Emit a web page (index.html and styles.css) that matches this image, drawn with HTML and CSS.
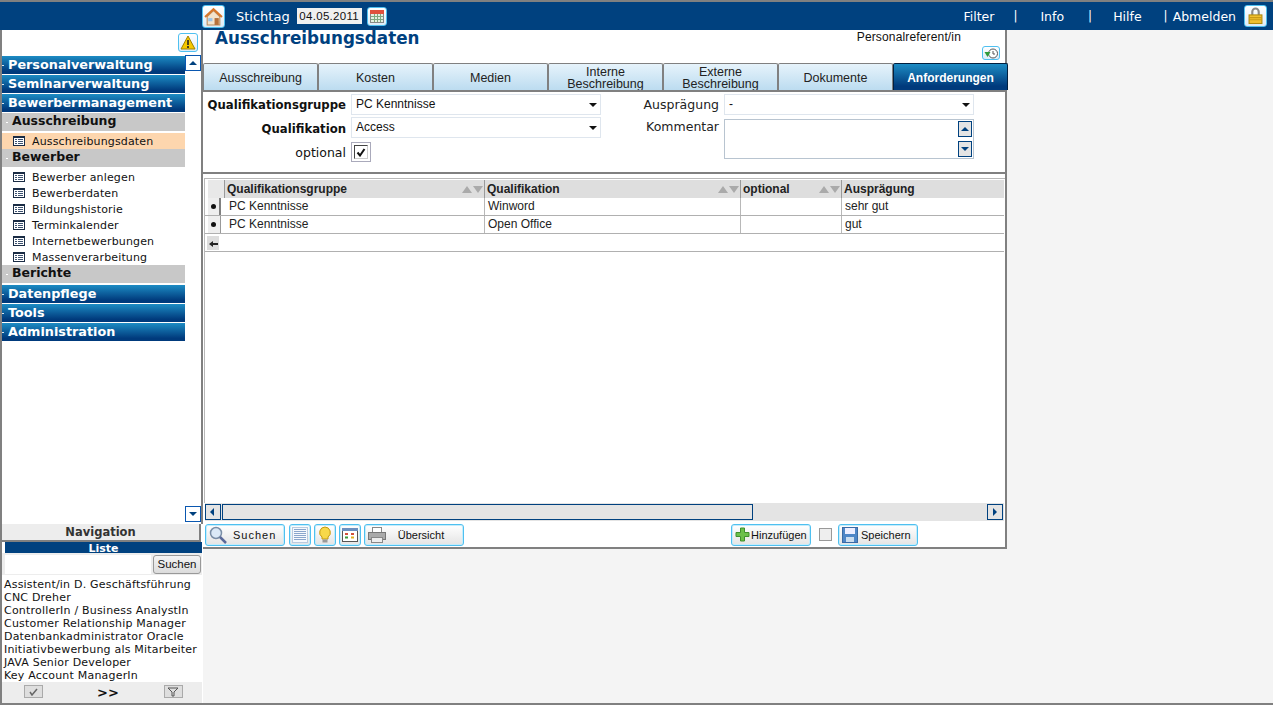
FILE: index.html
```html
<!DOCTYPE html>
<html>
  <head>
    <meta charset="UTF-8">
    <title>Ausschreibungsdaten</title>
    <link rel="stylesheet" href="styles.css">
  </head>
  <body>
    <svg class="defs" width="0" height="0">
      <symbol id="tbl" viewBox="0 0 12 10">
        <rect x="0.5" y="0.5" width="11" height="9" fill="#fff" stroke="#1a2c45"/>
        <path d="M0 1.500h12" stroke="#1a2c45" fill="none"/>
        <path d="M2 3.500h2M5 3.500h5M2 5.500h2M5 5.500h5M2 7.500h2M5 7.500h5" stroke="#3d5270" fill="none"/>
      </symbol>
    </svg>

    <header class="topbar">
      <div class="top-left">
        <span class="icon-btn home">
          <svg width="19" height="19" viewBox="0 0 18 18"><path d="M3 9 9 3.500 15 9v8H3z" fill="#f3e3cc" stroke="#b98a5a"/><path d="M1 9.500 9 2l8 7.500" fill="none" stroke="#d9772a" stroke-width="2"/><rect x="10" y="10.500" width="4" height="6.500" fill="#b5703a"/><rect x="4" y="10.500" width="4" height="3" fill="#9cc4e8"/></svg>
        </span>
        <span class="stichtag">Stichtag</span>
        <span class="date">04.05.2011</span>
        <span class="icon-btn cal">
          <svg width="16" height="16" viewBox="0 0 16 16"><rect x="1.500" y="2.500" width="13" height="12" fill="#e4efe0" stroke="#888"/><rect x="1" y="2" width="14" height="4" fill="#e0503c"/><path d="M2 8.500h12M2 11.500h12M5.500 6v8M8.500 6v8M11.500 6v8" stroke="#7fa87f"/></svg>
        </span>
      </div>
      <nav class="top-right">
        <span class="top-link">Filter</span><span class="sep one">|</span>
        <span class="top-link">Info</span><span class="sep two">|</span>
        <span class="top-link">Hilfe</span><span class="sep last">|</span>
        <span class="top-link">Abmelden</span>
        <span class="icon-btn lock">
          <svg width="15" height="18" viewBox="0 0 14 16"><path d="M4 7V4a3 3 0 0 1 6 0v3" fill="none" stroke="#8a8a8a" stroke-width="2"/><rect x="1" y="7" width="12" height="8" fill="#f0c030" stroke="#b08a10"/><path d="M1 9.500h12M1 11.500h12" stroke="#c89a18"/></svg>
        </span>
      </nav>
    </header>

    <div class="page">
      <aside class="sidebar">
        <div class="nav-area">
          <div class="warn-row">
            <span class="icon-btn warn">
              <svg width="16" height="15" viewBox="0 0 16 15"><path d="M8 1 15 14H1z" fill="#f5c800" stroke="#a08000"/><path d="M8 5v5M8 11v2" stroke="#222" stroke-width="1.6"/></svg>
            </span>
          </div>
          <div class="menu">
            <div class="menu-head">Personalverwaltung</div>
            <div class="menu-head">Seminarverwaltung</div>
            <div class="menu-head">Bewerbermanagement</div>
            <div class="menu-sub gap">Ausschreibung</div>
            <div class="menu-item active"><svg width="12" height="10"><use href="#tbl"/></svg>Ausschreibungsdaten</div>
            <div class="menu-sub gap">Bewerber</div>
            <div class="menu-item"><svg width="12" height="10"><use href="#tbl"/></svg>Bewerber anlegen</div>
            <div class="menu-item"><svg width="12" height="10"><use href="#tbl"/></svg>Bewerberdaten</div>
            <div class="menu-item"><svg width="12" height="10"><use href="#tbl"/></svg>Bildungshistorie</div>
            <div class="menu-item"><svg width="12" height="10"><use href="#tbl"/></svg>Terminkalender</div>
            <div class="menu-item"><svg width="12" height="10"><use href="#tbl"/></svg>Internetbewerbungen</div>
            <div class="menu-item"><svg width="12" height="10"><use href="#tbl"/></svg>Massenverarbeitung</div>
            <div class="menu-sub gap">Berichte</div>
            <div class="menu-head">Datenpflege</div>
            <div class="menu-head">Tools</div>
            <div class="menu-head">Administration</div>
          </div>
          <span class="nav-arrow up"></span>
          <span class="nav-arrow down"></span>
        </div>
        <div class="nav-title">Navigation</div>
        <div class="list-panel">
          <div class="list-title">Liste</div>
          <div class="list-search">
            <span class="list-input"></span>
            <span class="list-btn">Suchen</span>
          </div>
          <div class="list-items">
            <div>Assistent/in D. Geschäftsführung</div>
            <div>CNC Dreher</div>
            <div>ControllerIn / Business AnalystIn</div>
            <div>Customer Relationship Manager</div>
            <div>Datenbankadministrator Oracle</div>
            <div>Initiativbewerbung als Mitarbeiter</div>
            <div>JAVA Senior Developer</div>
            <div>Key Account ManagerIn</div>
          </div>
          <div class="list-foot">
            <span class="foot-btn"><svg width="9" height="8" viewBox="0 0 9 8"><path d="M1 4l2 3 5-6" fill="none" stroke="#666" stroke-width="1.5"/></svg></span>
            <span class="foot-more">&gt;&gt;</span>
            <span class="foot-btn"><svg width="12" height="10" viewBox="0 0 12 10"><path d="M1 1h10L7 5v4H5V5z" fill="none" stroke="#555"/></svg></span>
          </div>
        </div>
      </aside>

      <main class="content">
        <div class="title-row">
          <h1>Ausschreibungsdaten</h1>
          <div class="role">
            <span class="role-name">Personalreferent/in</span>
            <span class="icon-btn hist">
              <svg width="15" height="11" viewBox="0 0 14 11"><circle cx="8.500" cy="5.500" r="4.500" fill="#fff" stroke="#555"/><path d="M8.500 3v3h2" fill="none" stroke="#555"/><path d="M0 4h6L3 9z" fill="#2f9a3a"/></svg>
            </span>
          </div>
        </div>

        <div class="tabs">
          <div class="tab">Ausschreibung</div>
          <div class="tab">Kosten</div>
          <div class="tab">Medien</div>
          <div class="tab two">Interne<br>Beschreibung</div>
          <div class="tab two">Externe<br>Beschreibung</div>
          <div class="tab">Dokumente</div>
          <div class="tab current">Anforderungen</div>
        </div>

        <section class="form">
          <div class="form-col left">
            <div class="field">
              <label class="bold">Qualifikationsgruppe</label>
              <div class="select">PC Kenntnisse</div>
            </div>
            <div class="field low">
              <label class="bold">Qualifikation</label>
              <div class="select">Access</div>
            </div>
            <div class="field opt">
              <label>optional</label>
              <span class="check"><span class="check-box"><svg width="10" height="9" viewBox="0 0 10 9"><path d="M1.500 4.500 4 7.500 8.500 1" fill="none" stroke="#111" stroke-width="2"/></svg></span></span>
            </div>
          </div>
          <div class="form-col right">
            <div class="field">
              <label>Ausprägung</label>
              <div class="select">-</div>
            </div>
            <div class="field top">
              <label>Kommentar</label>
              <div class="textarea">
                <span class="ta-arrow up"></span>
                <span class="ta-arrow down"></span>
              </div>
            </div>
          </div>
        </section>

        <section class="grid-panel">
          <div class="grid-wrap">
            <div class="grid head">
              <div class="cell corner"></div>
              <div class="cell">Qualifikationsgruppe<span class="sort"><i class="s-up"></i><i class="s-down"></i></span></div>
              <div class="cell">Qualifikation<span class="sort"><i class="s-up"></i><i class="s-down"></i></span></div>
              <div class="cell">optional<span class="sort"><i class="s-up"></i><i class="s-down"></i></span></div>
              <div class="cell">Ausprägung</div>
            </div>
            <div class="grid row">
              <div class="cell marker cur"><b></b></div>
              <div class="cell">PC Kenntnisse</div>
              <div class="cell">Winword</div>
              <div class="cell"></div>
              <div class="cell">sehr gut</div>
            </div>
            <div class="grid row">
              <div class="cell marker"><b></b></div>
              <div class="cell">PC Kenntnisse</div>
              <div class="cell">Open Office</div>
              <div class="cell"></div>
              <div class="cell">gut</div>
            </div>
            <div class="add-row">
              <span class="add-icon"><svg width="9" height="7" viewBox="0 0 9 7"><path d="M0 4l4-3v2h5v2H4v2z" fill="#222"/></svg></span>
            </div>
          </div>
          <div class="hscroll">
            <span class="sb-btn left"></span>
            <span class="sb-thumb"></span>
            <span class="sb-btn right"></span>
          </div>
        </section>

        <footer class="toolbar">
          <span class="btn search">
            <svg width="20" height="20" viewBox="0 0 20 20"><circle cx="8" cy="8" r="5.500" fill="#dbe9f7" stroke="#7a8ea6" stroke-width="1.500"/><path d="M12 12l6 6" stroke="#5a6a9a" stroke-width="2.500"/></svg>
            <span class="btn-label spaced">Suchen</span>
          </span>
          <span class="btn square">
            <svg width="18" height="18" viewBox="0 0 18 18"><rect x="1.500" y="1.500" width="15" height="15" fill="#f6f9fd" stroke="#b9cbe0"/><path d="M3 3.500h12M3 5.500h12M3 7.500h12M3 9.500h12M3 11.500h12M3 13.500h12" stroke="#8aa6cc"/></svg>
          </span>
          <span class="btn square">
            <svg width="14" height="18" viewBox="0 0 14 18"><path d="M7 1a5.500 5.500 0 0 0-3 10v2h6v-2A5.500 5.500 0 0 0 7 1z" fill="#f8d94a" stroke="#c49a10"/><rect x="4.500" y="13.500" width="5" height="3" fill="#999"/></svg>
          </span>
          <span class="btn square">
            <svg width="18" height="16" viewBox="0 0 18 16"><rect x="1.500" y="1.500" width="15" height="13" fill="#fff" stroke="#555"/><rect x="1" y="1" width="16" height="3" fill="#6b8fc0"/><path d="M4 7h3M10 7h3" stroke="#d2503c" stroke-width="2"/><path d="M4 10.500h3" stroke="#3a9a3a" stroke-width="2"/><path d="M10 10.500h3" stroke="#e0b020" stroke-width="2"/></svg>
          </span>
          <span class="btn print">
            <svg width="20" height="18" viewBox="0 0 20 18"><rect x="5.500" y="1.500" width="9" height="6" fill="#fff" stroke="#888"/><rect x="1.500" y="6.500" width="17" height="7" fill="#aaa" stroke="#777"/><rect x="4.500" y="11.500" width="11" height="5" fill="#eee" stroke="#888"/></svg>
            <span class="btn-label center">Übersicht</span>
          </span>
          <span class="btn add">
            <svg width="15" height="15" viewBox="0 0 15 15"><path d="M5.500 1h4v4.500h4.500v4H9.500V14h-4V9.500H1v-4h4.500z" fill="#6cc04a" stroke="#3f8f2c"/></svg>
            <span class="btn-label">Hinzufügen</span>
          </span>
          <span class="tool-check"></span>
          <span class="btn save">
            <svg width="16" height="16" viewBox="0 0 16 16"><rect x="0.500" y="0.500" width="15" height="15" fill="#4f86c6" stroke="#3a6aa5"/><rect x="3" y="1" width="10" height="6" fill="#eef"/><rect x="4" y="10" width="8" height="5" fill="#cde"/></svg>
            <span class="btn-label">Speichern</span>
          </span>
        </footer>
      </main>
    </div>
  </body>
</html>
```

FILE: styles.css
```css
* {
  margin: 0;
  padding: 0;
  box-sizing: border-box;
}

html, body {
  height: 705px;
  overflow: hidden;
}

body {
  background: #f4f4f4;
  font-family: "DejaVu Sans", Verdana, sans-serif;
  font-size: 11px;
  color: #111;
  border-top: 2px solid #808080;
  border-bottom: 2px solid #808080;
}

.defs {
  display: block;
  height: 0;
}

.icon-btn {
  display: flex;
  align-items: center;
  justify-content: center;
  background: linear-gradient(#fff, #dcecf8);
  border: 1px solid #4fc0f0;
  border-radius: 3px;
}

/* top bar */

.topbar {
  height: 28px;
  background: #00417f;
  color: #fff;
  display: flex;
  justify-content: space-between;
  align-items: center;
  font-size: 13px;
  padding-left: 202px;
  padding-right: 6px;
}

.top-left, .top-right {
  display: flex;
  align-items: center;
}

.home {
  width: 23px;
  height: 23px;
}

.stichtag {
  margin-left: 11px;
}

.date {
  margin-left: 7px;
  width: 65px;
  height: 16px;
  line-height: 16px;
  text-align: center;
  background: #f0f0f0;
  color: #111;
  font-family: "Liberation Sans", Arial, sans-serif;
  font-size: 11.500px;
  letter-spacing: 0.3px;
}

.cal {
  margin-left: 5px;
  width: 20px;
  height: 19px;
}

.top-right {
  font-size: 12.500px;
}

.sep {
  font-size: 12px;
}

.sep.one {
  margin: 0 23px 0 19px;
}

.sep.two {
  margin: 0 21px 0 24px;
}

.sep.last {
  margin: 0 5px 0 22px;
}

.lock {
  width: 23px;
  height: 22px;
  margin-left: 8px;
}

/* sidebar */

.page {
  display: flex;
  align-items: flex-start;
}

.sidebar {
  width: 203px;
  height: 673px;
  flex: none;
  background: #fff;
  border-left: 2px solid #808080;
  display: flex;
  flex-direction: column;
}

.nav-area {
  position: relative;
  height: 494px;
  border-right: 2px solid #808080;
}

.warn-row {
  height: 26px;
  padding: 3px 3px 0 0;
  display: flex;
  justify-content: flex-end;
}

.warn {
  width: 20px;
  height: 19px;
}

.menu {
  width: 183px;
}

.menu-head {
  position: relative;
  height: 18px;
  margin-bottom: 1px;
  padding-left: 6px;
  line-height: 18px;
  color: #fff;
  font-weight: bold;
  font-size: 12.800px;
  white-space: nowrap;
  background: linear-gradient(#1d8cc4, #003a7c 85%);
}

.menu-head::before, .menu-sub::before {
  content: "";
  position: absolute;
  top: 9px;
  width: 2px;
  height: 1px;
  background: #dce8f0;
}

.menu-head::before {
  left: 0;
}

.menu-sub {
  position: relative;
  height: 18px;
  padding-left: 10px;
  line-height: 15px;
  font-weight: bold;
  font-size: 12.500px;
  background: #c8c8c8;
}

.menu-sub::before {
  left: 4px;
  background: #fff;
}

.menu-sub.gap {
  margin-bottom: 2px;
}

.menu-item {
  height: 16px;
  display: flex;
  align-items: center;
  gap: 7px;
  padding-left: 11px;
  white-space: nowrap;
  letter-spacing: 0.150px;
  color: #111;
}

.menu-item.active {
  background: #fdd6ae;
}

.nav-arrow {
  position: absolute;
  right: 0;
  width: 16px;
  height: 16px;
  border: 1px solid #0a57b0;
  background: #fff;
}

.nav-arrow::after {
  content: "";
  position: absolute;
  left: 3px;
  top: 5px;
  border-left: 4px solid transparent;
  border-right: 4px solid transparent;
}

.nav-arrow.up {
  top: 25px;
}

.nav-arrow.up::after {
  border-bottom: 4px solid #00417f;
}

.nav-arrow.down {
  top: 476px;
}

.nav-arrow.down::after {
  border-top: 4px solid #00417f;
}

.nav-title {
  height: 18px;
  line-height: 17px;
  text-align: center;
  font-weight: bold;
  font-size: 11.500px;
  color: #333;
  background: #ededed;
  border-right: 2px solid #808080;
  border-bottom: 2px solid #808080;
  margin-right: 2px;
}

.list-panel {
  flex: 1;
  display: flex;
  flex-direction: column;
  margin-right: 1px;
}

.list-title {
  height: 11px;
  margin-left: 3px;
  line-height: 13px;
  text-align: center;
  font-weight: bold;
  color: #fff;
  background: #00417f;
}

.list-search {
  height: 22px;
  display: flex;
  align-items: center;
  gap: 2px;
  padding-left: 3px;
  background: #ededed;
}

.list-input {
  width: 146px;
  height: 19px;
  background: #fff;
}

.list-btn {
  width: 48px;
  height: 19px;
  line-height: 17px;
  text-align: center;
  font-family: "Liberation Sans", Arial, sans-serif;
  font-size: 11.500px;
  background: linear-gradient(#f4f4f4, #dcdcdc);
  border: 1px solid #999;
  border-radius: 3px;
}

.list-items {
  height: 107px;
  padding: 3px 0 0 2px;
  line-height: 13px;
  white-space: nowrap;
  letter-spacing: 0.200px;
}

.list-foot {
  flex: 1;
  background: #ededed;
  display: flex;
  justify-content: space-between;
  align-items: flex-start;
  padding: 3px 19px 0 22px;
}

.foot-btn {
  width: 19px;
  height: 13px;
  display: flex;
  align-items: center;
  justify-content: center;
  background: #dedede;
  border: 1px solid #aaa;
}

.foot-more {
  margin-left: 9px;
  font-weight: bold;
  font-size: 13px;
  line-height: 16px;
}

/* main */

.content {
  width: 804px;
  height: 519px;
  background: #fff;
  border-right: 2px solid #808080;
  border-bottom: 2px solid #808080;
  display: flex;
  flex-direction: column;
}

.title-row {
  height: 33px;
  display: flex;
  justify-content: space-between;
  padding: 0 5px 0 12px;
}

h1 {
  font-size: 16.750px;
  line-height: 17px;
  color: #00417f;
}

.role {
  display: flex;
  flex-direction: column;
  align-items: flex-end;
  font-family: "Liberation Sans", Arial, sans-serif;
  font-size: 12px;
  letter-spacing: 0.150px;
  line-height: 15px;
}

.role-name {
  margin-right: 39px;
}

.hist {
  width: 18px;
  height: 14px;
  margin-top: 1px;
}

.tabs {
  display: flex;
  height: 27px;
  font-family: "Liberation Sans", Arial, sans-serif;
  font-size: 12.500px;
}

.tab {
  width: 115px;
  flex: none;
  display: flex;
  align-items: center;
  justify-content: center;
  text-align: center;
  line-height: 12px;
  padding-top: 2px;
  background: linear-gradient(#e6f3fb, #bcdcf0);
  border: 1px solid #808080;
  border-bottom: none;
  border-radius: 2px 2px 0 0;
  color: #222;
}

.tab.two {
  align-items: flex-end;
  padding-top: 0;
  padding-bottom: 0;
}

.tab.current {
  background: linear-gradient(#1d8cc4, #003a7c 85%);
  border-color: #001f3f;
  color: #fff;
  font-size: 12px;
  font-weight: bold;
  margin-right: -2px;
}

.form {
  height: 84px;
  display: flex;
  border-top: 2px solid #808080;
  border-bottom: 2px solid #808080;
  padding-top: 2px;
}

.form-col.left {
  width: 400px;
}

.form-col.right {
  width: 400px;
}

.field {
  display: flex;
  align-items: center;
  gap: 5px;
  margin-bottom: 2px;
}

.field.top {
  align-items: flex-start;
  margin-top: 4px;
}

.field.low label {
  padding-top: 2px;
}

.field.opt {
  margin-top: 4px;
}

.field.opt label {
  padding-top: 1px;
}

.field label {
  text-align: right;
  font-size: 12.500px;
  flex: none;
}

.left label {
  width: 143px;
}

.right label {
  width: 116px;
  color: #222;
}

.field label.bold {
  font-size: 11.700px;
  font-weight: bold;
}

.select {
  position: relative;
  width: 250px;
  height: 21px;
  line-height: 19px;
  padding-left: 4px;
  background: #fff;
  border: 1px solid #dfe6ee;
  font-family: "Liberation Sans", Arial, sans-serif;
  font-size: 12px;
}

.select::after {
  content: "";
  position: absolute;
  right: 3px;
  top: 8px;
  border-left: 4px solid transparent;
  border-right: 4px solid transparent;
  border-top: 4px solid #111;
}

.check {
  width: 20px;
  height: 20px;
  display: flex;
  align-items: center;
  justify-content: center;
  border: 1px solid #aab;
  background: #fff;
}

.check-box {
  width: 14px;
  height: 14px;
  display: flex;
  align-items: center;
  justify-content: center;
  border: 1px solid #ccc;
  border-top-color: #444;
  border-left-color: #444;
}

.textarea {
  position: relative;
  width: 250px;
  height: 40px;
  border: 1px solid #b8c4d0;
  background: #fff;
}

.ta-arrow {
  position: absolute;
  right: 1px;
  width: 14px;
  height: 16px;
  background: #e4e4e4;
  border: 1px solid #00417f;
}

.ta-arrow::after {
  content: "";
  position: absolute;
  left: 2px;
  top: 5px;
  border-left: 4px solid transparent;
  border-right: 4px solid transparent;
}

.ta-arrow.up {
  top: 1px;
}

.ta-arrow.up::after {
  border-bottom: 4px solid #00417f;
}

.ta-arrow.down {
  bottom: 1px;
}

.ta-arrow.down::after {
  border-top: 4px solid #00417f;
}

/* grid */

.grid-panel {
  flex: 1;
  display: flex;
  flex-direction: column;
  padding: 0 0 0 1px;
}

.grid-wrap {
  flex: 1;
  margin-top: 4px;
  padding-top: 1px;
  border-top: 1px solid #b8b8b8;
  border-left: 1px solid #b8b8b8;
  font-family: "Liberation Sans", Arial, sans-serif;
  font-size: 12px;
}

.grid {
  display: grid;
  grid-template-columns: 17px 260px 256px 101px 1fr;
  padding-left: 3px;
  margin-right: 1px;
}

.grid.head {
  height: 18px;
  font-weight: bold;
}

.grid.head .cell {
  position: relative;
  background: #dedede;
  line-height: 18px;
  padding-left: 2px;
  border-right: 1px solid #9a9a9a;
  color: #222;
}

.grid.head .cell:last-child {
  border-right: none;
}

.grid.head .corner {
  background: #e8e8e8;
  border-right: 1px solid #9a9a9a;
}

.sort {
  position: absolute;
  right: 1px;
  top: 6px;
  display: flex;
  gap: 1px;
}

.s-up, .s-down {
  display: block;
  border-left: 5px solid transparent;
  border-right: 5px solid transparent;
}

.s-up {
  border-bottom: 7px solid #aaa;
}

.s-down {
  border-top: 7px solid #aaa;
}

.grid.row {
  height: 18px;
  border-bottom: 1px solid #b0b0b0;
  color: #222;
}

.grid.row .cell {
  line-height: 16px;
  padding-left: 3px;
  border-right: 1px solid #b8b8b8;
}

.grid.row .cell:nth-child(2) {
  padding-left: 4px;
}

.grid.row .cell:last-child {
  border-right: none;
}

.marker {
  position: relative;
  background: #eee;
}

.grid.row .marker {
  border-right: 4px solid #fff;
}

.grid.row .marker.cur {
  box-shadow: inset -2px 0 0 #808080;
}

.grid.row .marker:not(.cur) {
  box-shadow: inset -1px 0 0 #999;
}

.marker b {
  position: absolute;
  left: 3px;
  top: 6px;
  width: 5px;
  height: 5px;
  border-radius: 50%;
  background: #111;
}

.add-row {
  height: 18px;
  border-bottom: 1px solid #b0b0b0;
  margin-right: 1px;
  padding: 2px 0 0 2px;
}

.add-icon {
  display: flex;
  align-items: center;
  justify-content: center;
  width: 12px;
  height: 14px;
  background: #ddd;
}

.hscroll {
  height: 18px;
  display: flex;
  align-items: center;
  background: #e4e4e4;
  margin-left: 1px;
  margin-right: 1px;
}

.sb-btn {
  position: relative;
  width: 16px;
  height: 16px;
  background: #e4e4e4;
  border: 1px solid #00417f;
  flex: none;
}

.sb-btn::after {
  content: "";
  position: absolute;
  top: 3px;
  border-top: 4px solid transparent;
  border-bottom: 4px solid transparent;
}

.sb-btn.left::after {
  left: 4px;
  border-right: 4px solid #00417f;
}

.sb-btn.right::after {
  left: 5px;
  border-left: 4px solid #00417f;
}

.sb-btn.right {
  margin-left: 234px;
}

.sb-thumb {
  width: 531px;
  height: 16px;
  margin-left: 1px;
  background: #e4e4e4;
  border: 1px solid #00417f;
}

/* toolbar */

.toolbar {
  height: 26px;
  display: flex;
  align-items: center;
  gap: 4px;
  padding: 1px 0 0 2px;
  font-family: "Liberation Sans", Arial, sans-serif;
  font-size: 11px;
}

.btn {
  height: 22px;
  display: flex;
  align-items: center;
  background: linear-gradient(#fff, #e4e4e4);
  border: 1px solid #4fc0f0;
  box-shadow: inset 0 0 0 1px #c4ecfb;
  border-radius: 3px;
  flex: none;
}

.btn.search {
  width: 80px;
  padding-left: 2px;
}

.btn-label.spaced {
  margin-left: 5px;
  letter-spacing: 1px;
}

.btn.square {
  width: 22px;
  justify-content: center;
  margin-right: -1px;
}

.btn.print {
  width: 100px;
  padding-left: 2px;
}

.btn-label.center {
  flex: 1;
  text-align: center;
  padding-right: 8px;
}

.btn.add {
  width: 80px;
  margin-left: 263px;
  padding-left: 3px;
  gap: 1px;
}

.tool-check {
  width: 13px;
  height: 13px;
  margin-left: 4px;
  background: #eee;
  border: 1px solid #999;
}

.btn.save {
  width: 80px;
  margin-left: 2px;
  padding-left: 3px;
  gap: 3px;
}
```
